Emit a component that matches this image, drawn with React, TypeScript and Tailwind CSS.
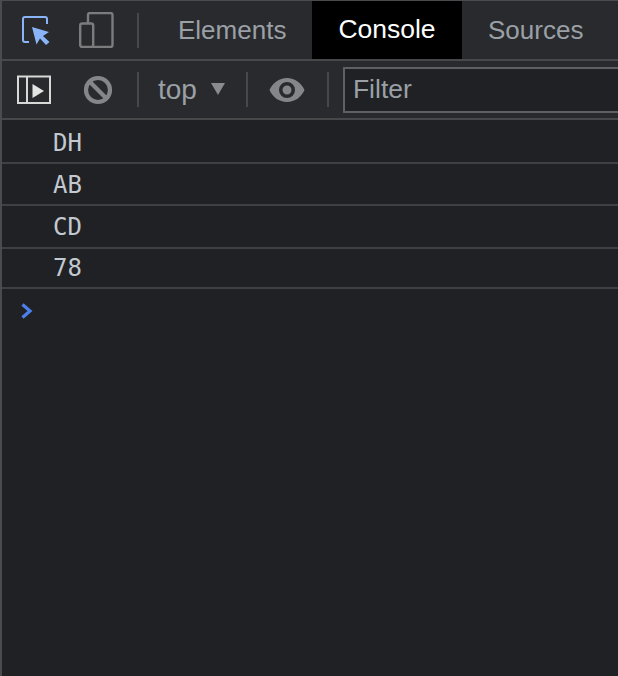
import React from "react";

const Sep = () => <div className="w-0.5 h-[35px] bg-[#47484a] shrink-0" />;

function Row({ text, h }: { text: string; h: string }) {
  return (
    <div className={`flex items-center pl-[51px] border-b-2 border-[#3f4042] font-['DejaVu_Sans_Mono','Liberation_Mono',monospace] text-[24px] text-[#c3c9d0] ${h}`}>
      {text}
    </div>
  );
}

export default function App() {
  return (
    <div className="w-[618px] h-[676px] overflow-hidden flex flex-col bg-[#202124] border-l-2 border-t border-[#4a4b4d] font-['Liberation_Sans',Arial,sans-serif]">
      <div className="flex items-center h-[60px] bg-[#292a2d] border-b-2 border-[#47484a] shrink-0">
        <svg width="34" height="36" viewBox="0 0 34 36" className="ml-[17px] text-[#8ab4f8]" fill="none">
          <path d="M10 30H6a2 2 0 0 1-2-2V7a2 2 0 0 1 2-2h20a2 2 0 0 1 2 2v5" stroke="currentColor" strokeWidth="2" />
          <path d="M13 15l17 5-6 4 6.500 6-3.500 3-6-6.500-3.500 6z" fill="currentColor" />
        </svg>
        <svg width="36" height="36" viewBox="0 0 36 36" className="ml-[26px]" fill="none" stroke="#7c7c7e" strokeWidth="2.400">
          <path d="M9 11V3a2 2 0 0 1 2-2h20.500a2 2 0 0 1 2 2v30a2 2 0 0 1-2 2H14" />
          <rect x="1.200" y="11.500" width="13" height="23.500" rx="2" />
        </svg>
        <div className="ml-[22px]"><Sep /></div>
        <div className="ml-[39px] w-[134px] text-[26px] text-[#9aa0a6]">Elements</div>
        <div className="w-[150px] h-full bg-black text-white text-[26.500px] flex items-center justify-center">Console</div>
        <div className="ml-[26px] text-[26px] text-[#9aa0a6]">Sources</div>
      </div>
      <div className="flex items-center h-[59px] bg-[#292a2d] border-b-2 border-[#47484a] shrink-0">
        <svg width="34" height="29" viewBox="0 0 34 29" className="ml-[15px]" fill="none">
          <rect x="1" y="1.500" width="32" height="26.500" stroke="#d8d8d8" strokeWidth="2" />
          <path d="M10 1.500v26.500" stroke="#d8d8d8" strokeWidth="2" />
          <path d="M15.500 9L27 16l-11.500 7z" fill="#e3e3e3" />
        </svg>
        <svg width="30" height="30" viewBox="0 0 30 30" className="ml-[32px]" fill="none" stroke="#85868a" strokeWidth="4.200">
          <circle cx="15" cy="15" r="12" />
          <path d="M6.500 6.500l17 17" />
        </svg>
        <div className="ml-[24px]"><Sep /></div>
        <div className="ml-[19px] text-[28px] text-[#9aa0a6]">top</div>
        <svg width="14" height="12" viewBox="0 0 14 12" className="ml-[14px] -mt-[1px]"><path d="M0 0h14L7 12z" fill="#8a8b8e" /></svg>
        <div className="ml-[21px]"><Sep /></div>
        <svg width="36" height="26" viewBox="0 0 36 26" className="ml-[21px]">
          <path fillRule="evenodd" d="M18 1C10 1 3.500 6 0.500 13c3 7 9.500 12 17.500 12s14.500-5 17.500-12C32.500 6 26 1 18 1zm0 20a8 8 0 1 1 0-16 8 8 0 0 1 0 16zm0-12.500a4.500 4.500 0 1 0 0 9 4.500 4.500 0 0 0 0-9z" fill="#85868a" />
        </svg>
        <div className="ml-[22px]"><Sep /></div>
        <div className="ml-[14px] flex-1 h-[46px] mr-[-20px] bg-[#202124] border-2 border-[#5f6062] flex items-center pl-[8px] text-[26.500px] text-[#9aa0a6]">Filter</div>
      </div>
      <Row text="DH" h="h-[44px] pt-[3px]" />
      <Row text="AB" h="h-[42px] pt-[1px]" />
      <Row text="CD" h="h-[43px]" />
      <Row text="78" h="h-[40px]" />
      <svg width="14" height="16" viewBox="0 0 14 16" className="ml-[18px] mt-[14px]" fill="none">
        <path d="M2.500 1.500L10 8l-7.500 6.500" stroke="#4a80ec" strokeWidth="3.200" />
      </svg>
    </div>
  );
}
